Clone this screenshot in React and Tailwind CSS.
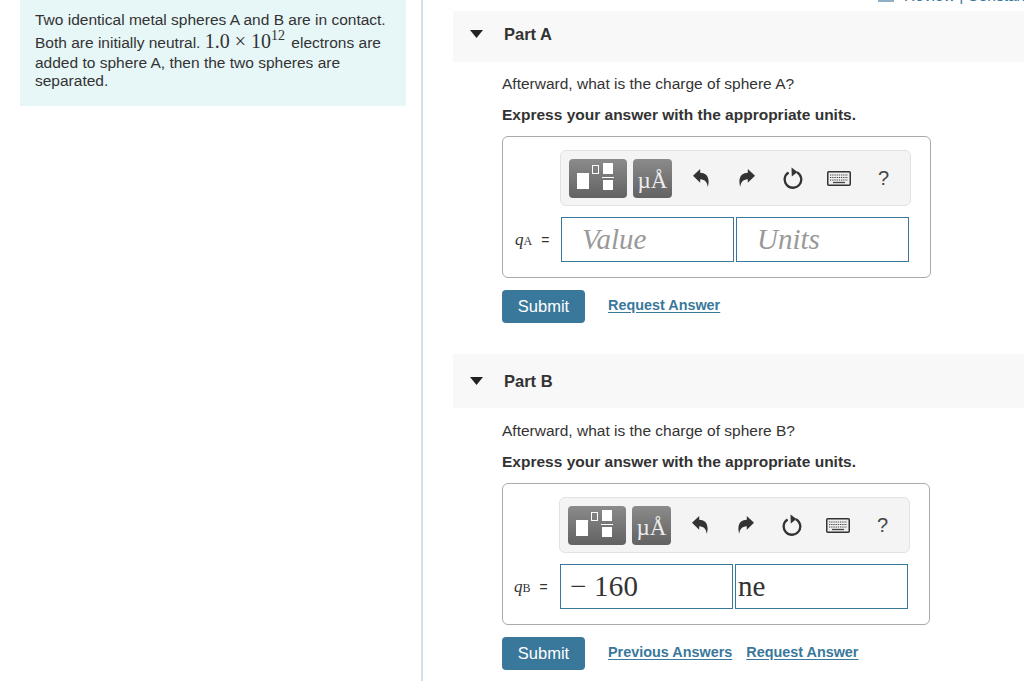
import React from 'react';

const sans = { fontFamily: '"Liberation Sans", Arial, sans-serif' };
const serif = { fontFamily: '"Liberation Serif", serif' };

function Undo({ flip }) {
  return (
    <svg width="16" height="18" viewBox="0 0 16 18" className={flip ? '-scale-x-100' : ''}>
      <path d="M0 6.8 L7.2 0 V3.8 C13 3.8 17.5 8 14.8 18 C14.4 13.5 12.2 10.4 7.2 10.2 V13.8 Z" fill="#333" />
    </svg>
  );
}

function Redo() {
  return (
    <svg width="21" height="22" viewBox="0 0 21 22">
      <path d="M14 5.2 A8.3 8.3 0 1 1 5.6 5.4" fill="none" stroke="#333" strokeWidth="2.3" />
      <path d="M8.5 0.5 L14.5 5 L8.8 9.5 Z" fill="#333" />
    </svg>
  );
}

function Keyboard() {
  return (
    <svg width="24" height="15" viewBox="0 0 24 15">
      <rect x="0.75" y="0.75" width="22.5" height="13.5" rx="1" fill="#eee" stroke="#333" strokeWidth="1.5" />
      <path d="M3 4 H21 M3 6.5 H21 M3 9 H21" stroke="#444" strokeWidth="1.2" strokeDasharray="1.3 0.9" />
      <path d="M6 11.5 H18" stroke="#444" strokeWidth="1.3" />
    </svg>
  );
}

function Toolbar({ ml }) {
  return (
    <div className={`flex items-center h-[56px] w-[351px] rounded-md border border-[#e2e2e2] bg-[#f4f4f4] pl-[8px] ${ml}`}>
      <div className="flex h-[39px] w-[58px] rounded bg-gradient-to-b from-[#8b8b8b] to-[#626262] relative shrink-0">
        <span className="absolute left-[8px] top-[14px] w-[12px] h-[16px] bg-white" />
        <span className="absolute left-[23px] top-[6px] w-[7px] h-[9px] border border-white" />
        <span className="absolute left-[34px] top-[4px] w-[10px] h-[11px] bg-white" />
        <span className="absolute left-[33px] top-[18px] w-[12px] h-[1px] bg-white" />
        <span className="absolute left-[34px] top-[21px] w-[10px] h-[10px] bg-white" />
      </div>
      <div className="flex h-[39px] w-[39px] ml-[6px] items-end justify-center pb-[6px] rounded bg-gradient-to-b from-[#8b8b8b] to-[#626262] text-[#eee] text-[23px] leading-none shrink-0" style={serif}>
        µÅ
      </div>
      <div className="flex items-center ml-[21px] w-[16px]"><Undo /></div>
      <div className="flex items-center ml-[30px] w-[16px]"><Undo flip /></div>
      <div className="flex items-center ml-[28px] w-[21px]"><Redo /></div>
      <div className="flex items-center ml-[23px] w-[24px]"><Keyboard /></div>
      <div className="ml-[27px] text-[20px] leading-none text-[#444]" style={sans}>?</div>
    </div>
  );
}

function Field({ children, placeholder }) {
  return (
    <div
      className={`h-[45px] w-[173px] border border-[#39789b] bg-white flex items-center whitespace-nowrap text-[29px] ${placeholder ? 'italic text-[#999]' : 'text-[#333]'}`}
      style={serif}
    >
      {children}
    </div>
  );
}

function Part({ name, letter, headerClass, boxW, ml, rowPl, value, units, links, afterHeader }) {
  return (
    <div>
      <div className={`flex items-center bg-[#f8f8f8] pl-[17px] ${headerClass}`}>
        <svg width="13" height="8" viewBox="0 0 13 8"><path d="M0 0 H13 L6.5 8 Z" fill="#222" /></svg>
        <span className="ml-[21px] text-[16.5px] font-bold text-[#333]">{name}</span>
      </div>
      <div className={`pl-[49px] ${afterHeader}`}>
        <p className="text-[15.5px] leading-[20px] text-[#333]">Afterward, what is the charge of sphere {letter}?</p>
        <p className="mt-[11px] text-[15.5px] leading-[20px] font-bold text-[#333]">Express your answer with the appropriate units.</p>
        <div className={`mt-[11px] h-[142px] rounded-md border border-[#aaa] bg-white pt-[13px] ${boxW}`}>
          <Toolbar ml={ml} />
          <div className={`flex items-center mt-[11px] ${rowPl}`}>
            <div className="w-[46px] text-[#333] flex items-baseline whitespace-nowrap" style={serif}>
              <span className="italic text-[17px]">q</span>
              <span className="text-[12px]">{letter}</span>
              <span className="ml-[9px] text-[14px]" style={sans}>=</span>
            </div>
            <Field placeholder={!value}>
              {value ? <span className="pl-[9px] tracking-[0.2px]">− 160</span> : <span className="pl-[20px]">Value</span>}
            </Field>
            <div className="ml-[2px]">
              <Field placeholder={!units}>
                {units ? <span className="pl-[2px]">{units}</span> : <span className="pl-[20px]">Units</span>}
              </Field>
            </div>
          </div>
        </div>
        <div className="flex items-center mt-[12px]">
          <button className="h-[33px] w-[83px] rounded-sm bg-[#39789b] text-white text-[16.5px]">Submit</button>
          <div className="flex ml-[23px] gap-[14px] -mt-[2px]">
            {links.map((l) => (
              <a key={l} className="text-[14.4px] font-bold text-[#39789b] underline underline-offset-2">{l}</a>
            ))}
          </div>
        </div>
      </div>
    </div>
  );
}

export default function App() {
  return (
    <div className="flex h-[681px] w-[1024px] overflow-hidden bg-white" style={sans}>
      <div className="w-[423px] h-full shrink-0 border-r-2 border-[#d4e0ec] pl-[20px]">
        <div className="w-[386px] h-[106px] bg-[#e7f6f7] pl-[15px] pt-[10px] text-[15.5px] text-[#333]">
          <p className="leading-[20px]">Two identical metal spheres A and B are in contact.</p>
          <p className="leading-[20px] mt-[1px] whitespace-nowrap">
            Both are initially neutral. <span className="text-[20px]" style={serif}>1.0 × 10<sup className="text-[14px] align-baseline relative -top-[8px]">12</sup></span><span className="ml-[2px]"> electrons are</span>
          </p>
          <p className="leading-[19px]">added to sphere A, then the two spheres are</p>
          <p className="leading-[18px]">separated.</p>
        </div>
      </div>
      <div className="flex-1 pl-[30px] min-w-0">
        <div className="h-[11px] overflow-hidden">
          <div className="flex gap-[10px] pl-[425px] -mt-[13px] h-[18px] text-[15.5px] whitespace-nowrap text-[#39789b]">
            <span className="w-[16px] h-[8px] bg-[#8fb0c4] shrink-0 self-end mb-[3px]" />
            <span className="self-center">Review | Constants</span>
          </div>
        </div>
        <Part name="Part A" letter="A" headerClass="h-[51px] pb-[5px]" boxW="w-[429px]" ml="ml-[57px]" rowPl="pl-[12px]" links={['Request Answer']} afterHeader="pt-[12px]" />
        <div className="mt-[31px]">
          <Part name="Part B" letter="B" headerClass="h-[54px]" boxW="w-[428px]" ml="ml-[56px]" rowPl="pl-[11px]" value units="ne" links={['Previous Answers', 'Request Answer']} afterHeader="pt-[13px]" />
        </div>
      </div>
    </div>
  );
}
